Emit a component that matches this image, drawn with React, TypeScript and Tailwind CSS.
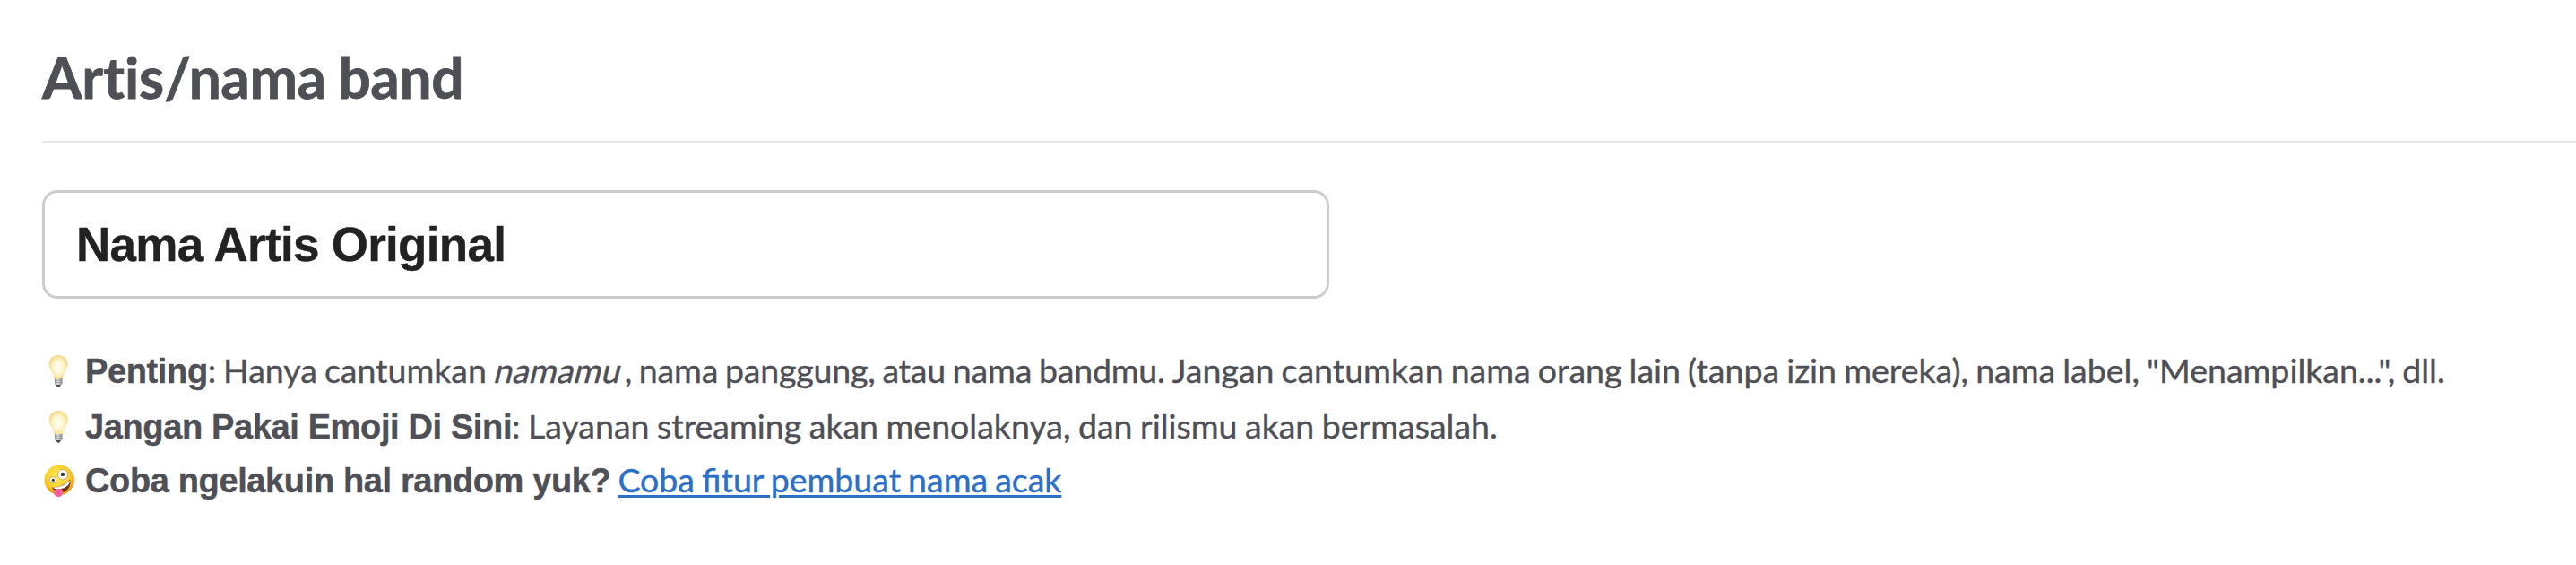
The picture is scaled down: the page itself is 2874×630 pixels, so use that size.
import type { ReactNode } from "react";

function Bulb({ id }: { id: string }) {
  return (
    <svg viewBox="0 0 36 38" className="mt-[13px] h-[38px] w-9" aria-hidden="true">
      <defs>
        <radialGradient id={id} cx="50%" cy="50%" r="56%">
          <stop offset="0" stopColor="#fffef2" />
          <stop offset="0.45" stopColor="#fff8d8" />
          <stop offset="0.75" stopColor="#fae6a0" />
          <stop offset="1" stopColor="#f0cd72" />
        </radialGradient>
        <linearGradient id={`${id}-base`}>
          <stop offset="0" stopColor="#8f8f8f" />
          <stop offset="0.4" stopColor="#e4e4e4" />
          <stop offset="1" stopColor="#8a8a8a" />
        </linearGradient>
      </defs>
      <path d="M17.2 1C11 1 6.8 5.400 6.800 11.400C6.800 16.500 10.600 19.300 11.600 23.500C12 25.400 12.400 27.800 13.600 28H20.800C22 27.800 22.400 25.400 22.800 23.500C23.800 19.300 27.600 16.500 27.600 11.400C27.600 5.400 23.400 1 17.200 1Z" fill={`url(#${id})`} />
      <path d="M13 27H21.500V33.500Q17.200 35 13 33.500Z" fill={`url(#${id}-base)`} />
      <path d="M13 29.500L21.500 28.900M13 32L21.500 31.300" stroke="#8d8d8d" strokeWidth="0.7" />
      <path d="M14.600 34H19.900Q19 36.900 17.200 36.900Q15.500 36.900 14.600 34Z" fill="#4a4a4a" />
    </svg>
  );
}

function ZanyFace() {
  return (
    <svg viewBox="0 0 36 38" className="mt-[14px] h-[38px] w-9" aria-hidden="true">
      <defs>
        <radialGradient id="face" cx="45%" cy="38%" r="62%">
          <stop offset="0" stopColor="#ffee5c" />
          <stop offset="0.6" stopColor="#fdd231" />
          <stop offset="1" stopColor="#ee920f" />
        </radialGradient>
      </defs>
      <circle cx="18.200" cy="17.200" r="16.700" fill="url(#face)" />
      <circle cx="22" cy="11.200" r="5.700" fill="#fff" stroke="#b98a4c" strokeWidth="0.7" />
      <circle cx="21.900" cy="10.900" r="2.200" fill="#4b3429" />
      <circle cx="11" cy="17.300" r="3.700" fill="#fff" stroke="#b98a4c" strokeWidth="0.7" />
      <circle cx="11.300" cy="17.300" r="1.600" fill="#4b3429" />
      <path d="M10 25.500C17 26 25 22.500 30 16.500C32 23 27.500 30.500 21 31C16 31.400 11.500 29.500 10 25.500Z" fill="#6b3518" />
      <path d="M10.800 25.400C17.500 26 25 22.800 29.600 17.400C30.500 20.500 28.200 23.300 25 25.300C20.500 28 13.500 28.400 10.800 25.400Z" fill="#fff" />
      <path d="M12.600 28.200C15.500 27 19.500 26.900 21.800 28V31.800C21.800 34.600 19.800 36.200 17.200 36.200C14.600 36.200 12.600 34.600 12.600 31.800Z" fill="#f5629b" />
      <path d="M17.200 29V33" stroke="#d83f7c" strokeWidth="0.8" />
    </svg>
  );
}

function Row({ icon, className, children }: { icon: ReactNode; className: string; children: ReactNode }) {
  return (
    <li className={`flex items-start ${className}`}>
      <span className="w-[47px] shrink-0">{icon}</span>
      <p className="leading-[62px]">{children}</p>
    </li>
  );
}

function Strong({ children }: { children: ReactNode }) {
  return (
    <strong className="font-['Liberation_Sans',sans-serif] text-[38px] font-bold tracking-[-0.37px] [word-spacing:0px]">{children}</strong>
  );
}

export default function App() {
  return (
    <main className="h-[630px] w-full overflow-hidden bg-white pl-[47px] font-['Lato',sans-serif] text-[#4f4f56] [-webkit-text-stroke:0.4px]">
      <header className="h-[160px] border-b-[3px] border-[#e5e7eb] pt-[46px]">
        <h1 className="text-[64px] leading-[80px] font-bold tracking-[-0.4px] [word-spacing:-1.4px] [-webkit-text-stroke:0.8px]">
          <span className="tracking-[-0.05px]">Artis</span>
          <span className="mr-[-2px]">/</span>nama band
        </h1>
      </header>
      <div className="mt-[52px] flex h-[121px] w-[1436px] items-center rounded-[17px] border-[3px] border-[#cccccc] px-[35px] font-['Liberation_Sans',sans-serif] text-[53px] leading-none font-bold tracking-[-0.72px] text-[#222]">
        Nama Artis Original
      </div>
      <ul className="mt-[49px] pl-px text-[37.5px] whitespace-nowrap">
        <Row icon={<Bulb id="bulb-a" />} className="h-[62px] [word-spacing:-1.6px]">
          <Strong>Penting</Strong>: Hanya cantumkan{" "}
          <span className="mr-[-5px] ml-[2px] inline-block -skew-x-[14deg]">namamu</span>{" "}
          <span className="tracking-[-0.19px]">, nama panggung, atau nama bandmu.</span>{" "}
          <span className="[word-spacing:-1.5px]">Jangan cantumkan nama orang lain (tanpa izin mereka), nama label, "Menampilkan...", dll.</span>
        </Row>
        <Row icon={<Bulb id="bulb-b" />} className="h-[60px] [word-spacing:-1.1px]">
          <Strong>Jangan Pakai Emoji Di Sini</Strong>: Layanan streaming akan menolaknya, dan rilismu akan bermasalah.
        </Row>
        <Row icon={<ZanyFace />} className="h-[60px] [word-spacing:-1.6px]">
          <Strong>Coba ngelakuin hal random yuk?</Strong>{" "}
          <a href="#" className="text-[#2b6fc7] underline decoration-[3px] underline-offset-[3px]">Coba fitur pembuat nama acak</a>
        </Row>
      </ul>
    </main>
  );
}
